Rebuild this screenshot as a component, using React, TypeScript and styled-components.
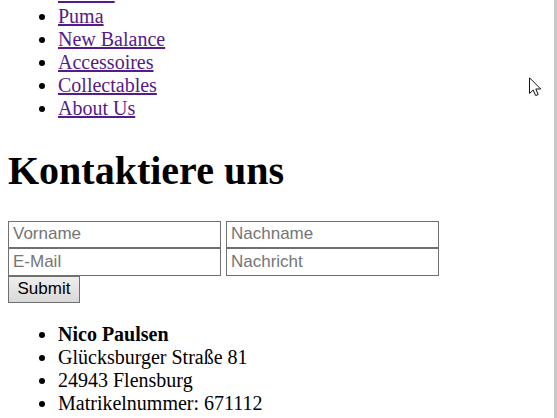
import React from "react";
import styled, { createGlobalStyle } from "styled-components";

const GlobalStyle = createGlobalStyle`
  body {
    margin: 0;
    background: #fff;
  }
`;

const Page = styled.main`
  box-sizing: border-box;
  height: 100vh;
  overflow: hidden;
  padding: 0 8px;
  border-right: 3px solid #c8c8c8;
  color: #000;
  font: 20px/23px "Liberation Serif", "Times New Roman", serif;
`;

const List = styled.ul<{ $scrolled?: boolean }>`
  margin: ${(p) => (p.$scrolled ? "-18px" : "20px")} 0 0;
  padding: 0 0 0 50px;
`;

const NavLink = styled.a`
  color: #551a8b;
  text-decoration: underline;
  text-decoration-thickness: 2px;
`;

const Title = styled.h1`
  margin: 28px 0 27px;
  font-size: 40px;
  line-height: 46px;
`;

const Form = styled.form`
  display: grid;
  grid-template-columns: repeat(2, minmax(0, 213px));
  grid-template-rows: 27px 28px 27px;
  column-gap: 5px;
`;

const Field = styled.input`
  box-sizing: border-box;
  min-width: 0;
  margin: 0;
  padding: 0 4px 1px;
  border: 1px solid #707070;
  border-radius: 0;
  background: #fff;
  color: #000;
  font: 17px "Liberation Sans", Arial, sans-serif;

  &::placeholder {
    color: #757575;
    opacity: 1;
  }
`;

const SubmitButton = styled.button`
  justify-self: start;
  min-width: 72px;
  margin: 0;
  padding: 0 8px 2px;
  border: 1px solid #707070;
  border-radius: 0;
  background: linear-gradient(#efefef, #d8d8d8);
  color: #000;
  font: 17px "Liberation Sans", Arial, sans-serif;
`;

const Pointer = styled.svg`
  position: absolute;
  top: 77px;
  right: 15px;
  pointer-events: none;
`;

const links = ["Adidas", "Puma", "New Balance", "Accessoires", "Collectables", "About Us"];
const fields = [
  { name: "Vorname", type: "text" },
  { name: "Nachname", type: "text" },
  { name: "E-Mail", type: "email" },
  { name: "Nachricht", type: "text" },
];

export default function App() {
  return (
    <>
      <GlobalStyle />
      <Page>
        <nav>
          <List $scrolled>
            {links.map((label) => (
              <li key={label}>
                <NavLink href="#">{label}</NavLink>
              </li>
            ))}
          </List>
        </nav>
        <Title>Kontaktiere uns</Title>
        <Form onSubmit={(e) => e.preventDefault()}>
          {fields.map(({ name, type }) => (
            <Field key={name} type={type} name={name} placeholder={name} aria-label={name} />
          ))}
          <SubmitButton type="submit">Submit</SubmitButton>
        </Form>
        <List>
          <li>
            <b>Nico Paulsen</b>
          </li>
          <li>Glücksburger Straße 81</li>
          <li>24943 Flensburg</li>
          <li>Matrikelnummer: 671112</li>
        </List>
      </Page>
      <Pointer width="13" height="20" viewBox="0 0 13 20" aria-hidden="true">
        <path
          d="M.5 .8V16.5L4.2 13L6.7 18.6L9.2 17.5L6.8 12H11.7Z"
          fill="#fff"
          stroke="#101018"
          strokeWidth="1"
        />
      </Pointer>
    </>
  );
}
